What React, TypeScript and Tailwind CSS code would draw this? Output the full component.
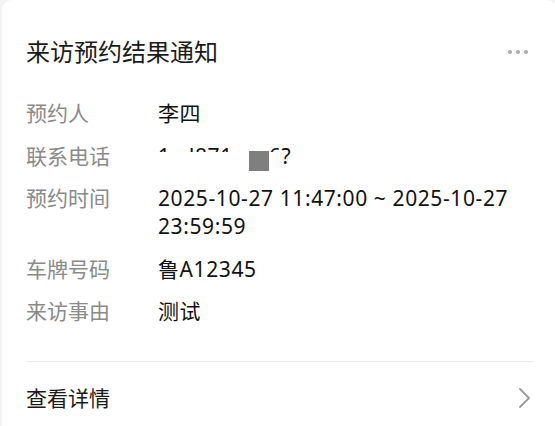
import React from "react";

const fontStack =
  '"Noto Sans", "Noto Sans CJK SC", "Microsoft YaHei", sans-serif';

const labelClass = "w-[132px] shrink-0 text-[#8a8a8a]";
const valueClass = "min-w-0 flex-1 tracking-[0.6px] text-[#111111]";

interface InfoRowProps {
  label: string;
  children: React.ReactNode;
}

function InfoRow({ label, children }: InfoRowProps) {
  return (
    <div className="flex items-start text-[21px] leading-[28px]">
      <div className={labelClass}>{label}</div>
      <div className={valueClass}>{children}</div>
    </div>
  );
}

// phone number shows as a scrubbed screenshot: only the tops of some digits remain
function ClippedText({ text }: { text: string }) {
  return (
    <span className="block h-[10px] overflow-hidden">
      <span className="block whitespace-pre leading-[28px]">{text}</span>
    </span>
  );
}

function MaskedPhone() {
  return (
    <div className="flex h-[28px] items-start">
      <ClippedText text="1" />
      <span className="w-[18px]" />
      <ClippedText text="J871" />
      <span className="w-[16px]" />
      <span className="mt-[9px] block h-[20px] w-[20px] bg-[#7f7f7f]" />
      <ClippedText text="6" />
      <span className="leading-[28px]">?</span>
    </div>
  );
}

export default function App() {
  return (
    <div
      className="h-[426px] w-[555px] overflow-hidden bg-[#f3f3f3]"
      style={{ fontFamily: fontStack }}
    >
      <div className="ml-[2px] min-h-[470px] w-[555px] rounded-[10px] bg-white px-[24px] pt-[36px]">
        <div className="flex items-center justify-between">
          <h1 className="text-[24px] leading-[32px] font-normal text-[#1a1a1a]">
            来访预约结果通知
          </h1>
          <div className="mr-[5px] flex items-center gap-[4px]">
            <span className="h-[4px] w-[4px] rounded-full bg-[#a8a8a8]" />
            <span className="h-[4px] w-[4px] rounded-full bg-[#a8a8a8]" />
            <span className="h-[4px] w-[4px] rounded-full bg-[#a8a8a8]" />
          </div>
        </div>

        <div className="mt-[31px] flex flex-col gap-[14.5px]">
          <InfoRow label="预约人">李四</InfoRow>
          <InfoRow label="联系电话">
            <MaskedPhone />
          </InfoRow>
          <InfoRow label="预约时间">
            2025-10-27 11:47:00 ~ 2025-10-27
            <br />
            23:59:59
          </InfoRow>
          <InfoRow label="车牌号码">鲁A12345</InfoRow>
          <InfoRow label="来访事由">测试</InfoRow>
        </div>

        <div className="mt-[36px] h-px bg-[#ececec]" />

        <div className="flex items-center justify-between pt-[22px]">
          <span className="text-[21px] leading-[28px] text-[#1a1a1a]">查看详情</span>
          <svg
            width="14"
            height="22"
            viewBox="0 0 14 22"
            fill="none"
            className="mr-[1px]"
          >
            <path
              d="M2 2 L11 11 L2 20"
              stroke="#9a9a9a"
              strokeWidth="1.8"
              strokeLinecap="round"
              strokeLinejoin="round"
            />
          </svg>
        </div>
      </div>
    </div>
  );
}
